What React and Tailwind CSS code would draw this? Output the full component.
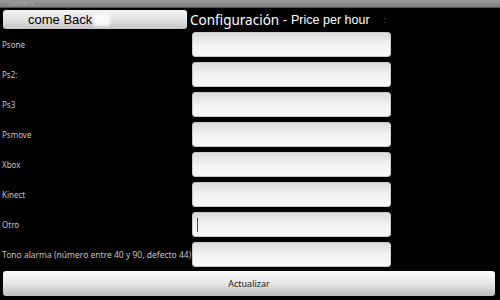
import { memo } from "react";

function App() {
  const fields = [
    { label: "Psone" },
    { label: "Ps2:" },
    { label: "Ps3" },
    { label: "Psmove" },
    { label: "Xbox" },
    { label: "Kinect" },
    { label: "Otro", focused: true },
    { label: "Tono alarma (número entre 40 y 90, defecto 44)", long: true },
  ];

  return (
    <div className="w-[500px] h-[300px] bg-black overflow-hidden flex flex-col font-['Noto_Sans',sans-serif]">
      {/* title bar */}
      <div className="h-[8px] bg-gradient-to-b from-[#9a9a9a] to-[#7c7c7c] border-b border-[#555] flex items-center px-2 overflow-hidden">
        <span className="text-[7px] leading-[8px] text-[#a8a8a8]">Gamers</span>
      </div>

      {/* header row */}
      <div className="flex items-center h-[21px] mt-[1px]">
        <button className="ml-[3px] w-[184px] h-[19px] rounded-[3px] bg-gradient-to-b from-[#f4f4f4] via-[#e2e2e2] to-[#c4c4c4] flex items-center pl-[25px]">
          <span className="font-['Liberation_Sans',sans-serif] text-[13px] text-black leading-[16px]">come Back</span>
          <span className="ml-[2px] w-[16px] h-[12px] bg-white/80 blur-[1.5px]"></span>
        </button>
        <div className="ml-[3px] flex items-center text-white whitespace-nowrap">
          <span className="text-[13.5px] leading-[18px]">Configuración -</span>
          <span className="ml-[4px] font-['Liberation_Sans',sans-serif] text-[12.5px] leading-[16px]">Price per hour</span>
          <span className="ml-[14px] text-[8px] text-[#666] leading-[10px]">:</span>
        </div>
      </div>

      {/* fields */}
      <div className="flex flex-col gap-[5px] mt-[2px]">
        {fields.map((f, i) => (
          <div key={i} className="flex items-center h-[25px]">
            <div
              className={
                f.long
                  ? "w-[192px] pl-[2px] text-[#c4c4c4] text-[8.5px] leading-[12px] whitespace-nowrap"
                  : "w-[192px] pl-[2px] text-[#c4c4c4] text-[8px] leading-[12px] whitespace-nowrap"
              }
            >
              {f.label}
            </div>
            <div className="w-[199px] h-[25px] rounded-[3px] bg-gradient-to-b from-[#dcdcdc] via-[#f2f2f2] to-[#fafafa] border border-[#c8c8c8] flex items-center">
              {f.focused && <span className="ml-[4px] w-[1px] h-[14px] bg-[#444]"></span>}
            </div>
          </div>
        ))}
      </div>

      {/* submit */}
      <button className="mt-[4px] ml-[3px] w-[492px] h-[25px] rounded-[3px] bg-gradient-to-b from-[#fafafa] via-[#e6e6e6] to-[#bdbdbd] flex items-center justify-center">
        <span className="text-[9px] text-[#222] leading-[12px]">Actualizar</span>
      </button>
    </div>
  );
}

export default memo(App);
